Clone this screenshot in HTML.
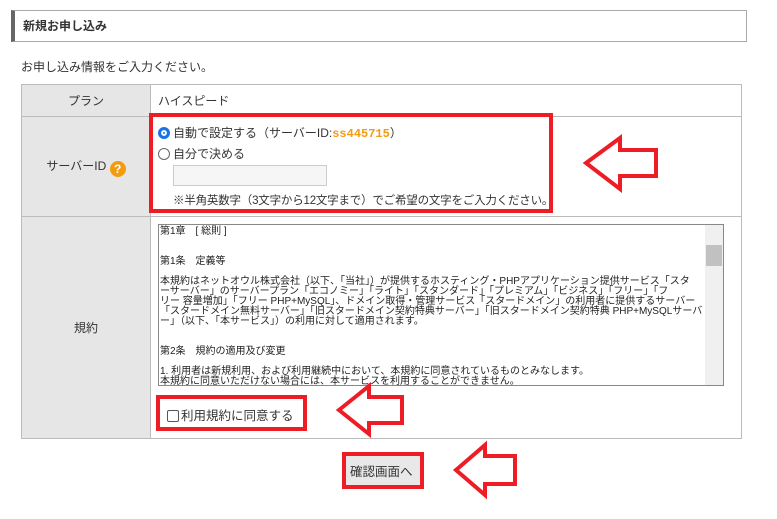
<!DOCTYPE html>
<html><head><meta charset="utf-8"><style>
*{box-sizing:border-box;margin:0;padding:0}
body{width:777px;height:519px;overflow:hidden;background:#fff;font-family:"Liberation Sans","Noto Sans CJK JP",sans-serif;font-size:12px;color:#333;position:relative}
.abs{position:absolute}
.hdr{left:11px;top:10px;width:736px;height:32px;border:1px solid #aaa;border-left:4px solid #666;font-weight:bold;font-size:12px;line-height:30px;padding-left:8px;color:#333}
table{position:absolute;left:21px;top:84px;width:721px;border-collapse:collapse}
td{border:1px solid #bbb;font-size:12px}
td.l{background:#e6e6e6;width:129px;text-align:center}
td.r{padding-left:7px}
.ta{left:158px;top:224px;width:566px;height:162px;border:1px solid #888;background:#fff;font-size:10px;line-height:10px;color:#222;padding:2px 20px 0 1px;overflow:hidden;white-space:nowrap}
.sb{right:0;top:0;width:18px;height:100%;background:#f0f0f0}
.red{border:4px solid #ee1c25}
.radio{display:inline-block;width:12px;height:12px;border-radius:50%;border:1px solid #666;vertical-align:-2px;margin-right:3px}
</style></head><body>
<div class="abs hdr">新規お申し込み</div>
<div class="abs" style="left:21px;top:58px">お申し込み情報をご入力ください。</div>
<table>
<tr style="height:32px"><td class="l">プラン</td><td class="r">ハイスピード</td></tr>
<tr style="height:100px"><td class="l">サーバーID <span style="display:inline-block;width:16px;height:16px;border-radius:50%;background:#f39c12;color:#fff;font-weight:bold;font-size:12px;line-height:16px;vertical-align:-3px">?</span></td><td class="r"></td></tr>
<tr style="height:222px"><td class="l">規約</td><td class="r"></td></tr>
</table>
<div class="abs" style="left:158px;top:124px"><span class="radio" style="border:3px solid #1a73e8;box-shadow:inset 0 0 0 2px #fff;background:#1a73e8"></span>自動で設定する（サーバーID:<span style="color:#f39c12;font-weight:bold;font-family:'Liberation Mono',monospace">ss445715</span>）</div>
<div class="abs" style="left:158px;top:145px"><span class="radio"></span>自分で決める</div>
<div class="abs" style="left:173px;top:165px;width:154px;height:21px;border:1px solid #ccc;background:#f6f6f6"></div>
<div class="abs" style="left:173px;top:192px;font-size:11.5px;letter-spacing:-0.2px">※半角英数字（3文字から12文字まで）でご希望の文字をご入力ください。</div>
<div class="abs red" style="left:149px;top:113px;width:404px;height:100px"></div>
<div class="abs ta">第1章　[ 総則 ]<br><br><br>第1条　定義等<br><br>本規約はネットオウル株式会社（以下、「当社」）が提供するホスティング・PHPアプリケーション提供サービス「スタ<br>ーサーバー」のサーバープラン「エコノミー」「ライト」「スタンダード」「プレミアム」「ビジネス」「フリー」「フ<br>リー 容量増加」「フリー PHP+MySQL」、ドメイン取得・管理サービス「スタードメイン」の利用者に提供するサーバー<br>「スタードメイン無料サーバー」「旧スタードメイン契約特典サーバー」「旧スタードメイン契約特典 PHP+MySQLサーバ<br>ー」（以下、「本サービス」）の利用に対して適用されます。<br><br><br>第2条　規約の適用及び変更<br><br>1. 利用者は新規利用、および利用継続中において、本規約に同意されているものとみなします。<br>本規約に同意いただけない場合には、本サービスを利用することができません。
<div class="abs sb"><div class="abs" style="left:1px;top:20px;width:16px;height:21px;background:#c1c1c1"></div></div></div>
<div class="abs red" style="left:156px;top:395px;width:151px;height:36px"></div>
<div class="abs" style="left:167px;top:405px;font-size:12.5px"><span style="display:inline-block;width:12px;height:12px;border:1px solid #555;border-radius:2px;vertical-align:-2px;margin-right:2px"></span>利用規約に同意する</div>
<div class="abs red" style="left:342px;top:452px;width:82px;height:37px;background:#e8e8e8"></div>
<div class="abs" style="left:350px;top:461px;font-size:12.5px">確認画面へ</div>
<svg class="abs" style="left:0;top:0" width="777" height="519"><g fill="none" stroke="#ee1c25" stroke-width="4">
<polygon points="586,163 620,138 620,150 656,150 656,176 620,176 620,189"/>
<polygon points="339,410 369,386 369,397 402,397 402,423 369,423 369,434"/>
<polygon points="456,470 485,445 485,456 515,456 515,484 485,484 485,495"/>
</g></svg>
</body></html>
